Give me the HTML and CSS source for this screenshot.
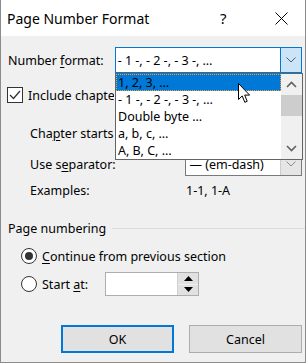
FILE: index.html
```html
<!DOCTYPE html>
<html>
<head>
<meta charset="utf-8">
<link rel="stylesheet" href="styles.css">
</head>
<body>
<div class="dialog">
  <header class="titlebar">
    <span class="title">Page Number Format</span>
    <span class="help">?</span>
    <svg class="close" width="13" height="13" viewBox="0 0 13 13"><path d="M0.5 0.5 L12.5 12.5 M12.5 0.5 L0.5 12.5" stroke="#000" stroke-width="1" fill="none"/></svg>
  </header>
  <main class="content">
    <div class="row row-format">
      <span class="label-format">Number <u>f</u>ormat:</span>
      <div class="combo combo-open">
        <span class="combo-text">- 1 -, - 2 -, - 3 -, …</span>
        <span class="combo-btn combo-btn-open"><svg width="10" height="6" viewBox="0 0 10 6"><path d="M0.5 0.5 L5 5 L9.5 0.5" stroke="#5a5a5a" fill="none"/></svg></span>
      </div>
    </div>
    <div class="row row-include">
      <span class="checkbox"><svg width="14" height="14" viewBox="0 0 14 14"><path d="M2 7 L5.5 10.5 L12 3" stroke="#333" stroke-width="1.3" fill="none"/></svg></span>
      <span class="check-label">Include chapter number</span>
    </div>
    <div class="row row-indent row-chapter">
      <span class="label-indent label-clipped">Cha<u>p</u>ter starts with style:</span>
      <div class="combo combo-small combo-hidden">
        <span class="combo-text"></span>
        <span class="combo-btn"></span>
      </div>
    </div>
    <div class="row row-indent row-sep">
      <span class="label-indent">Use s<u>e</u>parator:</span>
      <div class="combo combo-small">
        <span class="combo-text">— (em-dash)</span>
        <span class="combo-btn combo-btn-gray"><svg width="10" height="6" viewBox="0 0 10 6"><path d="M0.5 0.5 L5 5 L9.5 0.5" stroke="#8a8a8a" fill="none"/></svg></span>
      </div>
    </div>
    <div class="row row-indent row-examples">
      <span class="label-indent">Examples:</span>
      <span class="examples">1-1, 1-A</span>
    </div>
    <div class="row group-head">
      <span>Page numbering</span>
      <span class="group-line"></span>
    </div>
    <div class="row row-radio row-continue">
      <span class="radio radio-on"></span>
      <span class="radio-label"><u>C</u>ontinue from previous section</span>
    </div>
    <div class="row row-radio row-start">
      <span class="radio"></span>
      <span class="radio-label start-label">Start <u>a</u>t:</span>
      <div class="spinner">
        <span class="spin-field"></span>
        <span class="spin-btns">
          <span class="spin-btn"><svg width="9" height="5" viewBox="0 0 9 5"><path d="M0 5 L4.5 0 L9 5 Z" fill="#000"/></svg></span>
          <span class="spin-btn"><svg width="9" height="5" viewBox="0 0 9 5"><path d="M0 0 L4.5 5 L9 0 Z" fill="#000"/></svg></span>
        </span>
      </div>
    </div>
    <div class="row row-buttons">
      <button class="btn btn-default">OK</button>
      <button class="btn">Cancel</button>
    </div>
  </main>

  <div class="listbox">
    <ul class="list-items">
      <li class="item item-selected">1, 2, 3, …</li>
      <li class="item">- 1 -, - 2 -, - 3 -, …</li>
      <li class="item">Double byte …</li>
      <li class="item">a, b, c, …</li>
      <li class="item">A, B, C, …</li>
    </ul>
    <div class="scrollbar">
      <span class="sb-arrow"><svg width="11" height="7" viewBox="0 0 11 7"><path d="M1 6 L5.5 1.5 L10 6" stroke="#606060" stroke-width="1.6" fill="none"/></svg></span>
      <span class="sb-thumb"></span>
      <span class="sb-track"></span>
      <span class="sb-arrow"><svg width="11" height="7" viewBox="0 0 11 7"><path d="M1 1 L5.5 5.5 L10 1" stroke="#606060" stroke-width="1.6" fill="none"/></svg></span>
    </div>
  </div>

  <svg class="cursor" width="13" height="21" viewBox="0 0 13 21"><path d="M0.5 0.5 L0.5 16.5 L4.2 12.9 L6.8 19.3 L9.2 18.3 L6.7 12.1 L11.6 12.1 Z" fill="#fff" stroke="#000" stroke-width="1" stroke-linejoin="miter"/></svg>
</div>
</body>
</html>
```
FILE: styles.css
```css
* { box-sizing: border-box; }
html, body { margin: 0; padding: 0; }
body {
  background: #ffffff;
  font-family: "Segoe UI", "Noto Sans", sans-serif;
  font-size: 12.5px;
  color: #000;
}
u { text-decoration-thickness: 1px; text-underline-offset: 2px; }

.dialog {
  position: relative;
  width: 306px;
  height: 363px;
  border: 1px solid #8c8c8c;
  border-top: none;
  background: #f0f0f0;
  display: flex;
  flex-direction: column;
  overflow: hidden;
}

.titlebar {
  height: 36px;
  flex: 0 0 36px;
  background: #ffffff;
  display: flex;
  align-items: center;
  padding-left: 6px;
}
.title { font-size: 14px; width: 213px; }
.help { font-size: 15px; width: 55px; }
.close { display: block; }

.content {
  display: flex;
  flex-direction: column;
  padding-left: 7px;
  padding-right: 3px;
}
.row { display: flex; align-items: center; white-space: nowrap; }

.row-format { margin-top: 11px; height: 26px; }
.label-format { width: 107px; }
.combo {
  display: flex;
  background: #fff;
  border: 1px solid #7a7a7a;
  height: 100%;
}
.combo-open { width: 188px; border-color: #0078d7; }
.combo-text { flex: 1; padding-left: 2px; display: flex; align-items: center; overflow: hidden; }
.combo-btn {
  width: 21px;
  display: flex;
  align-items: center;
  justify-content: center;
}
.combo-btn-open { background: #cce4f7; border-left: 1px solid #0078d7; }
.combo-btn-gray { background: #e5e5e5; border-left: 1px solid #cccccc; }

.row-include { margin-top: 14px; height: 16px; }
.checkbox {
  width: 16px; height: 16px;
  margin-left: -1px;
  border: 1px solid #333;
  background: #fff;
  display: flex; align-items: center; justify-content: center;
}
.check-label { margin-left: 5px; width: 86px; overflow: hidden; }

.row-indent { padding-left: 22px; }
.label-indent { width: 156px; }
.label-clipped { width: 84px; margin-right: 72px; overflow: hidden; }
.combo-small { width: 117px; }
.row-chapter { margin-top: 18px; height: 24px; }
.row-sep { margin-top: 7px; height: 24px; }
.row-sep .combo-text { padding-left: 3px; }
.row-examples { margin-top: 6px; height: 16px; }

.group-head { margin-top: 22px; height: 16px; margin-right: -3px; }
.group-line { flex: 1; height: 1px; background: #dcdcdc; margin-left: 6px; }

.row-radio { padding-left: 13px; }
.radio {
  width: 16px; height: 16px;
  border: 1px solid #333;
  border-radius: 50%;
  background: #fff;
  display: flex; align-items: center; justify-content: center;
}
.radio-on::after {
  content: "";
  width: 8px; height: 8px;
  border-radius: 50%;
  background: #333;
}
.radio-label { margin-left: 5px; }
.row-continue { margin-top: 12px; height: 16px; }
.row-start { margin-top: 8px; height: 24px; }
.start-label { width: 63px; }

.spinner {
  width: 94px; height: 24px;
  border: 1px solid #adadad;
  background: #fff;
  display: flex;
}
.spin-field { flex: 1; }
.spin-btns { width: 21px; display: flex; flex-direction: column; border-left: 1px solid #d0d0d0; }
.spin-btn {
  flex: 1;
  background: #e1e1e1;
  display: flex; align-items: center; justify-content: center;
}
.spin-btn + .spin-btn { border-top: 1px solid #f0f0f0; }

.row-buttons { margin-top: 29px; height: 28px; justify-content: flex-end; gap: 15px; }
.btn {
  width: 113px; height: 28px;
  font-family: inherit; font-size: 12.5px; color: #000;
  background: #e1e1e1;
  border: 1px solid #adadad;
  padding: 0;
}
.btn-default { border: 2px solid #0078d7; }

.listbox {
  position: absolute;
  left: 114px;
  top: 73px;
  width: 188px;
  height: 87px;
  border: 1px solid #646464;
  background: #fff;
  display: flex;
}
.list-items { list-style: none; margin: 0; padding: 0; flex: 1; }
.item { height: 17px; line-height: 17px; padding-left: 2px; white-space: nowrap; }
.item-selected { background: #0078d7; outline: 1px dotted #e8a040; outline-offset: -1px; }
.scrollbar { width: 21px; background: #f0f0f0; display: flex; flex-direction: column; }
.sb-arrow { height: 21px; display: flex; align-items: center; justify-content: center; }
.sb-thumb { height: 21px; background: #cdcdcd; }
.sb-track { flex: 1; }

.cursor { position: absolute; left: 237px; top: 83px; }
```
